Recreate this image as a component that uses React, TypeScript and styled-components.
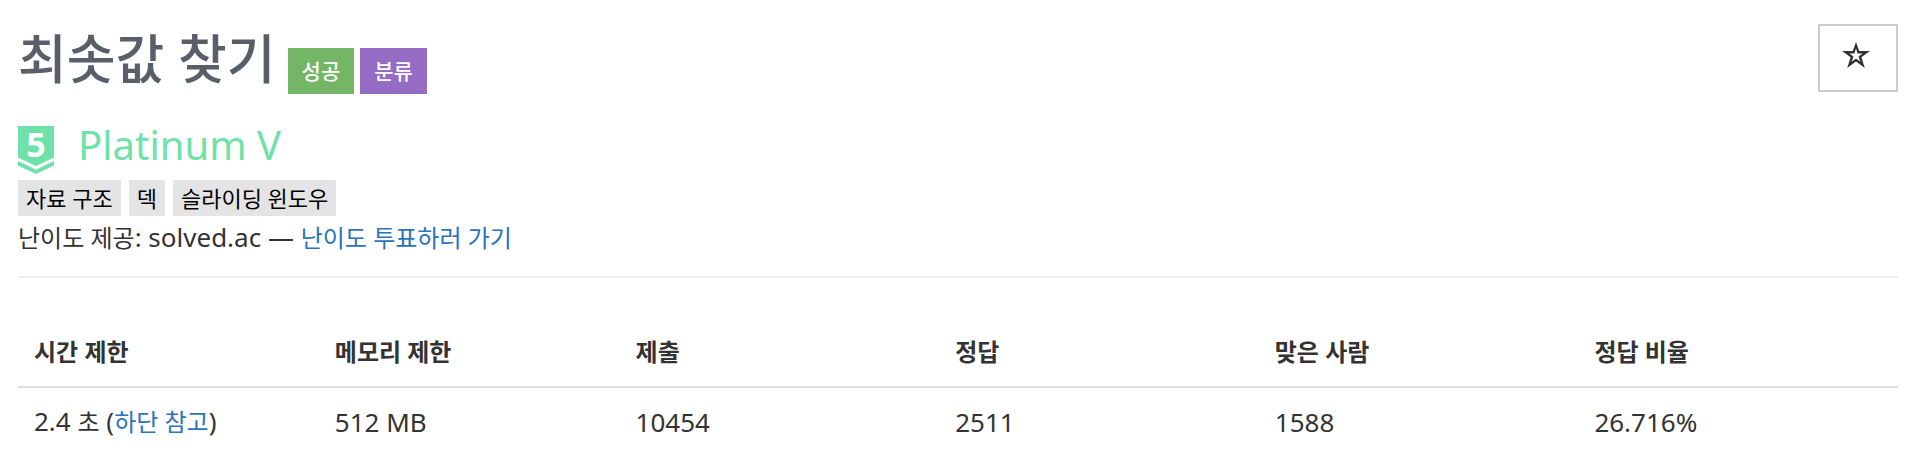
import React from "react";
import styled, { createGlobalStyle } from "styled-components";

const GlobalStyle = createGlobalStyle`
  *, *::before, *::after { box-sizing: border-box; }
  body {
    margin: 0;
    background: #fff;
    color: #333;
    font-family: "Noto Sans", "Noto Sans CJK KR", sans-serif;
    font-size: 26px;
    line-height: 36px;
  }
`;

const Page = styled.main`
  padding: 24px 14px 0 18px;
`;

const Header = styled.header`
  display: flex;
  justify-content: space-between;
  align-items: flex-start;
`;

const TitleGroup = styled.div`
  display: flex;
  align-items: flex-end;
  gap: 6px;
`;

const Title = styled.h1`
  margin: 0 6px 0 0;
  color: #585f69;
  font-size: 53px;
  font-weight: 500;
  line-height: 70px;
`;

const Badge = styled.span<{ $color: string }>`
  padding: 0 14px;
  background: ${(p) => p.$color};
  color: #fff;
  font-size: 21px;
  font-weight: 500;
  line-height: 46px;
`;

const FavoriteButton = styled.button`
  display: flex;
  align-items: center;
  justify-content: center;
  width: 80px;
  height: 68px;
  padding: 0 4px 6px 0;
  border: 2px solid #ccc;
  background: #fff;
  color: #333;
`;

const Level = styled.div`
  display: flex;
  align-items: center;
  gap: 24px;
  height: 48px;
  margin-top: 32px;
  color: #6ee2a9;
  font-size: 40px;
  line-height: 48px;
`;

const LevelName = styled.span`
  padding-bottom: 10px;
`;

const TierBadge = styled.svg`
  overflow: visible;
`;

const TierNumber = styled.text`
  fill: #fff;
  font-size: 34px;
  font-weight: 700;
  text-anchor: middle;
`;

const Tags = styled.ul`
  display: flex;
  gap: 8px;
  margin: 6px 0 0;
  padding: 0;
  list-style: none;
`;

const Tag = styled.li`
  padding: 0 8px;
  background: #e4e4e4;
  color: #000;
  font-size: 22px;
  line-height: 36px;
`;

const Credit = styled.p`
  margin: 3px 0 0;
`;

const Korean = styled.span`
  font-size: 24px;
`;

const Link = styled.a`
  color: #2a73bd;
  font-size: 24px;
  text-decoration: none;
`;

const Divider = styled.hr`
  margin: 20px 0 40px;
  border: 0;
  border-top: 2px solid #eee;
`;

const InfoTable = styled.table`
  width: 100%;
  border-collapse: separate;
  border-spacing: 0;
  table-layout: fixed;
`;

const HeadCell = styled.th<{ $width: string }>`
  width: ${(p) => p.$width};
  padding: 16px;
  border-bottom: 2px solid #ddd;
  font-size: 24px;
  font-weight: 700;
  text-align: left;
`;

const Cell = styled.td`
  padding: 15px 16px;
`;

const columns = [
  { label: "시간 제한", width: "16%" },
  { label: "메모리 제한", width: "16%" },
  { label: "제출", width: "17%" },
  { label: "정답", width: "17%" },
  { label: "맞은 사람", width: "17%" },
  { label: "정답 비율", width: "17%" },
];

function TierIcon() {
  return (
    <TierBadge width="36" height="48" viewBox="0 0 36 48">
      <path d="M0 0H36V31.5L18 40L0 31.5Z" fill="currentColor" />
      <path d="M0 35L18 43.8L36 35V39.4L18 48L0 39.4Z" fill="currentColor" />
      <TierNumber x="18" y="31">
        5
      </TierNumber>
    </TierBadge>
  );
}

function StarIcon() {
  return (
    <svg width="28" height="26" viewBox="0 0 28 26" aria-hidden="true">
      <path
        fill="currentColor"
        fillRule="evenodd"
        d="M14 0L17.2 9H28L19.4 15.2L22.8 26L14 19.5L5.2 26L8.6 15.2L0 9H10.8ZM14 6.6L12.4 11.6H7.4L11.5 14.6L9.8 19.7L14 16.6L18.2 19.7L16.5 14.6L20.6 11.6H15.6Z"
      />
    </svg>
  );
}

export default function App() {
  return (
    <>
      <GlobalStyle />
      <Page>
        <Header>
          <TitleGroup>
            <Title>최솟값 찾기</Title>
            <Badge $color="#74b566">성공</Badge>
            <Badge $color="#946cc4">분류</Badge>
          </TitleGroup>
          <FavoriteButton type="button" aria-label="즐겨찾기">
            <StarIcon />
          </FavoriteButton>
        </Header>
        <Level>
          <TierIcon />
          <LevelName>Platinum V</LevelName>
        </Level>
        <Tags>
          <Tag>자료 구조</Tag>
          <Tag>덱</Tag>
          <Tag>슬라이딩 윈도우</Tag>
        </Tags>
        <Credit>
          <Korean>난이도 제공</Korean>: solved.ac — <Link href="#vote">난이도 투표하러 가기</Link>
        </Credit>
        <Divider />
        <InfoTable>
          <thead>
            <tr>
              {columns.map((c) => (
                <HeadCell key={c.label} $width={c.width} scope="col">
                  {c.label}
                </HeadCell>
              ))}
            </tr>
          </thead>
          <tbody>
            <tr>
              <Cell>
                2.4 <Korean>초</Korean> (<Link href="#limit">하단 참고</Link>)
              </Cell>
              <Cell>512 MB</Cell>
              <Cell>10454</Cell>
              <Cell>2511</Cell>
              <Cell>1588</Cell>
              <Cell>26.716%</Cell>
            </tr>
          </tbody>
        </InfoTable>
      </Page>
    </>
  );
}
